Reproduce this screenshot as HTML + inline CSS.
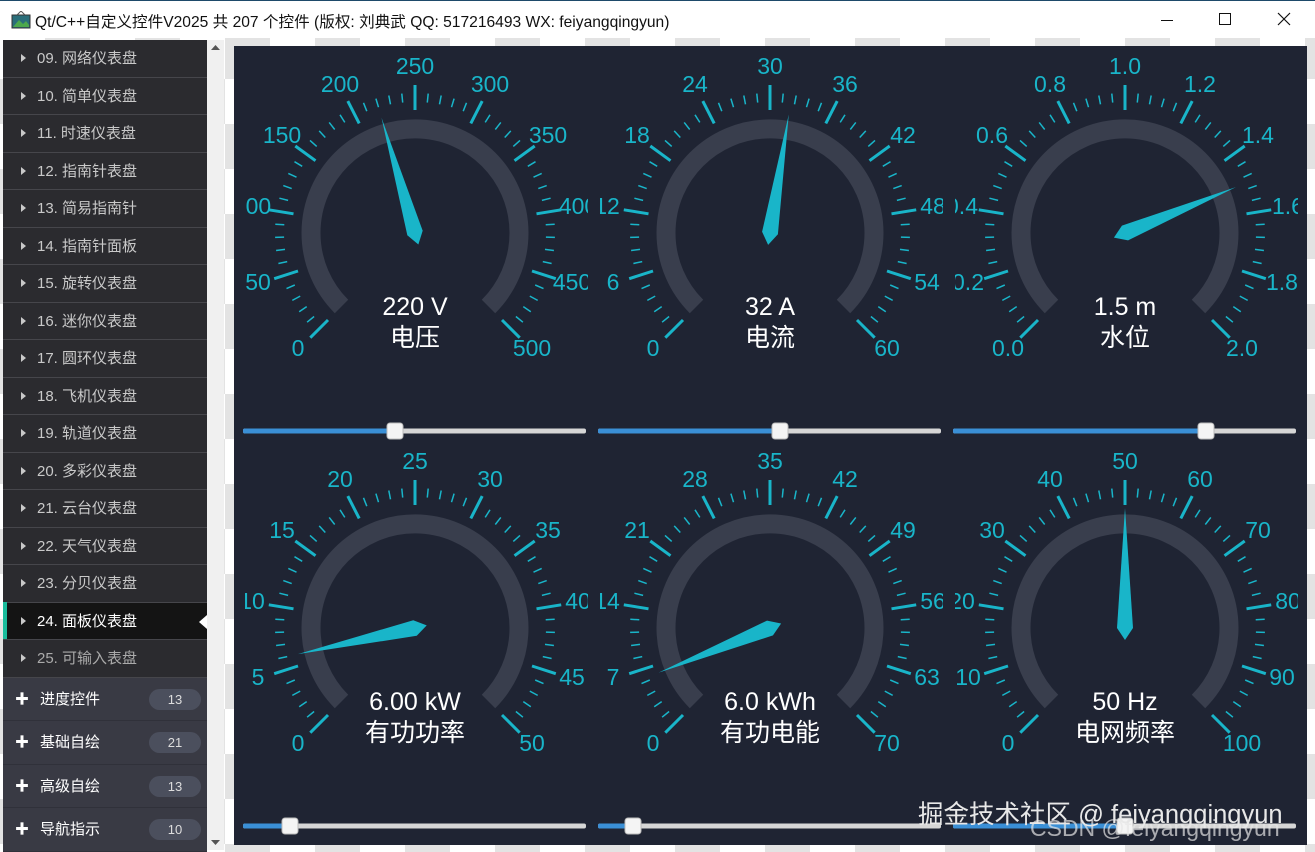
<!DOCTYPE html>
<html><head><meta charset="utf-8">
<style>
*{margin:0;padding:0;box-sizing:border-box}
body{width:1315px;height:852px;overflow:hidden;background:#fff;font-family:"Liberation Sans","Noto Sans CJK SC",sans-serif;position:relative}
#title{position:absolute;left:0;top:0;width:1315px;height:38px;background:#fff;border-top:1px solid #1e4a6a}
#title .t{position:absolute;left:35px;top:9px;font-size:15.6px;color:#111}
#bg{position:absolute;left:0;top:38px;width:1315px;height:814px;
background-color:#fff;background-image:repeating-conic-gradient(#e3e3e3 0 25%,#fff 0 50%);background-size:90px 90px;background-position:0 -4px}
#side{position:absolute;left:3px;top:40px;width:204px;height:810px;background:#2b2b2f}
.it{height:37.5px;border-bottom:1px solid #46464b;color:#c9c9c9;font-size:15px;line-height:37px;padding-left:34px;position:relative}
.it:before{content:"";position:absolute;left:18px;top:14px;border-left:5px solid #c9c9c9;border-top:4.5px solid transparent;border-bottom:4.5px solid transparent}
.it.a{background:#141414;color:#fff}
.it.a:after{content:"";position:absolute;right:0;top:12px;border-right:8px solid #fff;border-top:7px solid transparent;border-bottom:7px solid transparent}
.gr{height:43.5px;background:#393a44;border-bottom:1px solid #30313a;color:#fff;font-size:15px;line-height:43px;padding-left:37px;position:relative}
.gr:before{content:"✚";position:absolute;left:12px;top:0;font-size:14px;color:#fff}
.gr b{position:absolute;right:6px;top:11px;width:52px;height:21px;border-radius:11px;background:#4b4f5d;color:#ddd;font-weight:normal;font-size:13px;line-height:21px;text-align:center}
#sb{position:absolute;left:207px;top:40px;width:17px;height:810px;background:#f0f0f0}
#panel{position:absolute;left:234px;top:46px;width:1073px;height:799px;background:#1f2433}
.wm{position:absolute;font-size:22px;color:#e8e8e8;white-space:nowrap}
</style></head><body>
<div id="bg"></div>
<div id="title">
<svg style="position:absolute;left:11px;top:10px" width="20" height="18" viewBox="0 0 20 18"><rect x="1" y="4" width="18" height="13" fill="#2a6e7a" stroke="#333"/><path d="M2 16 L8 9 L12 13 L15 10 L18 14 V16Z" fill="#4ca84c"/><path d="M6 4 L10 0 L14 4" fill="none" stroke="#555"/></svg>
<span class="t">Qt/C++自定义控件V2025 共 207 个控件 (版权: 刘典武 QQ: 517216493 WX: feiyangqingyun)</span>
<div style="position:absolute;left:1161px;top:19px;width:12px;height:1px;background:#111"></div>
<div style="position:absolute;left:1219px;top:12px;width:12px;height:12px;border:1px solid #111"></div>
<svg style="position:absolute;left:1277px;top:11px" width="14" height="14"><path d="M1 1L13 13M13 1L1 13" stroke="#111" stroke-width="1.2"/></svg>
</div>
<div id="side">
<div class="it">09. 网络仪表盘</div><div class="it">10. 简单仪表盘</div><div class="it">11. 时速仪表盘</div><div class="it">12. 指南针表盘</div><div class="it">13. 简易指南针</div><div class="it">14. 指南针面板</div><div class="it">15. 旋转仪表盘</div><div class="it">16. 迷你仪表盘</div><div class="it">17. 圆环仪表盘</div><div class="it">18. 飞机仪表盘</div><div class="it">19. 轨道仪表盘</div><div class="it">20. 多彩仪表盘</div><div class="it">21. 云台仪表盘</div><div class="it">22. 天气仪表盘</div><div class="it">23. 分贝仪表盘</div><div class="it a">24. 面板仪表盘</div><div class="it" style="color:#aaa">25. 可输入表盘</div>
<div class="gr">进度控件<b>13</b></div><div class="gr">基础自绘<b>21</b></div><div class="gr">高级自绘<b>13</b></div><div class="gr">导航指示<b>10</b></div>
</div>
<div style="position:absolute;left:3px;top:602px;width:4px;height:37px;background:#1abc9c"></div>
<div id="sb"><svg width="17" height="17"><path d="M4 10L8.5 5L13 10Z" fill="#555"/></svg><svg style="position:absolute;left:0;bottom:0" width="17" height="17"><path d="M4 7L8.5 12L13 7Z" fill="#555"/></svg></div>
<div id="panel"></div>
<svg id="g" style="position:absolute;left:0;top:0" width="1315" height="852"></svg>
<svg style="position:absolute;left:0;top:0" width="1315" height="852" font-family="Liberation Sans, Noto Sans CJK SC, sans-serif">
<g font-size="23" fill="#19b5c9" text-anchor="middle" dominant-baseline="central">
<svg x="245" y="46" width="343" height="395" overflow="hidden"><g transform="translate(170,186)">
<text x="-117" y="116">0</text><text x="-157" y="50">50</text><text x="-163" y="-26">100</text><text x="-133" y="-97">150</text><text x="-75" y="-148">200</text><text x="0" y="-166">250</text><text x="75" y="-148">300</text><text x="133" y="-97">350</text><text x="163" y="-26">400</text><text x="157" y="50">450</text><text x="117" y="116">500</text>
<text x="0" y="75" fill="#fff" font-size="25">220 V</text><text x="0" y="106" fill="#fff" font-size="25">电压</text></g></svg>
<svg x="600" y="46" width="343" height="395" overflow="hidden"><g transform="translate(170,186)">
<text x="-117" y="116">0</text><text x="-157" y="50">6</text><text x="-163" y="-26">12</text><text x="-133" y="-97">18</text><text x="-75" y="-148">24</text><text x="0" y="-166">30</text><text x="75" y="-148">36</text><text x="133" y="-97">42</text><text x="163" y="-26">48</text><text x="157" y="50">54</text><text x="117" y="116">60</text>
<text x="0" y="75" fill="#fff" font-size="25">32 A</text><text x="0" y="106" fill="#fff" font-size="25">电流</text></g></svg>
<svg x="955" y="46" width="343" height="395" overflow="hidden"><g transform="translate(170,186)">
<text x="-117" y="116">0.0</text><text x="-157" y="50">0.2</text><text x="-163" y="-26">0.4</text><text x="-133" y="-97">0.6</text><text x="-75" y="-148">0.8</text><text x="0" y="-166">1.0</text><text x="75" y="-148">1.2</text><text x="133" y="-97">1.4</text><text x="163" y="-26">1.6</text><text x="157" y="50">1.8</text><text x="117" y="116">2.0</text>
<text x="0" y="75" fill="#fff" font-size="25">1.5 m</text><text x="0" y="106" fill="#fff" font-size="25">水位</text></g></svg>
<svg x="245" y="441" width="343" height="395" overflow="hidden"><g transform="translate(170,186)">
<text x="-117" y="116">0</text><text x="-157" y="50">5</text><text x="-163" y="-26">10</text><text x="-133" y="-97">15</text><text x="-75" y="-148">20</text><text x="0" y="-166">25</text><text x="75" y="-148">30</text><text x="133" y="-97">35</text><text x="163" y="-26">40</text><text x="157" y="50">45</text><text x="117" y="116">50</text>
<text x="0" y="75" fill="#fff" font-size="25">6.00 kW</text><text x="0" y="106" fill="#fff" font-size="25">有功功率</text></g></svg>
<svg x="600" y="441" width="343" height="395" overflow="hidden"><g transform="translate(170,186)">
<text x="-117" y="116">0</text><text x="-157" y="50">7</text><text x="-163" y="-26">14</text><text x="-133" y="-97">21</text><text x="-75" y="-148">28</text><text x="0" y="-166">35</text><text x="75" y="-148">42</text><text x="133" y="-97">49</text><text x="163" y="-26">56</text><text x="157" y="50">63</text><text x="117" y="116">70</text>
<text x="0" y="75" fill="#fff" font-size="25">6.0 kWh</text><text x="0" y="106" fill="#fff" font-size="25">有功电能</text></g></svg>
<svg x="955" y="441" width="343" height="395" overflow="hidden"><g transform="translate(170,186)">
<text x="-117" y="116">0</text><text x="-157" y="50">10</text><text x="-163" y="-26">20</text><text x="-133" y="-97">30</text><text x="-75" y="-148">40</text><text x="0" y="-166">50</text><text x="75" y="-148">60</text><text x="133" y="-97">70</text><text x="163" y="-26">80</text><text x="157" y="50">90</text><text x="117" y="116">100</text>
<text x="0" y="75" fill="#fff" font-size="25">50 Hz</text><text x="0" y="106" fill="#fff" font-size="25">电网频率</text></g></svg>
</g>
</svg>
<div class="wm" style="left:918px;top:794px;font-size:25.5px">掘金技术社区 @ feiyangqingyun</div>
<div class="wm" style="left:1030px;top:815px;font-size:23px;color:rgba(230,230,230,.7)">CSDN @feiyangqingyun</div>
<script>
var s='',ns=[[415,233,.44],[770,233,32/60],[1125,233,.75],[415,628,.12],[770,628,6/70],[1125,628,.5]];
function P(cx,cy,r,a){a=a*Math.PI/180;return [(cx+r*Math.cos(a)).toFixed(1),(cy-r*Math.sin(a)).toFixed(1)];}
ns.forEach(function(n){var cx=n[0],cy=n[1];
s+='<path d="M'+(cx-73.5)+' '+(cy+73.5)+' A104 104 0 1 1 '+(cx+73.5)+' '+(cy+73.5)+'" fill="none" stroke="#393e4d" stroke-width="19"/>';
for(var i=0;i<=50;i++){var a=225-5.4*i,mj=i%5==0,p=P(cx,cy,mj?123:131,a),q=P(cx,cy,mj?148:140,a);
s+='<line x1="'+p[0]+'" y1="'+p[1]+'" x2="'+q[0]+'" y2="'+q[1]+'" stroke="#19b5c9" stroke-width="'+(mj?3:1.5)+'"/>';}
var ang=225-270*n[2];
s+='<polygon points="120,0 0,-8 -12,0 0,8" fill="#19b5c9" transform="translate('+cx+','+cy+') rotate('+(-ang)+')"/>';
var sx=cx-172,w=343,y=cy+198,hx;
if(cx==415)hx=[395,290][cy<400?0:1];if(cx==770)hx=[780,633][cy<400?0:1];if(cx==1125)hx=[1206,1125][cy<400?0:1];
s+='<rect x="'+sx+'" y="'+(y-2.5)+'" width="'+w+'" height="5" rx="2" fill="#d6d6d6"/>';
s+='<rect x="'+sx+'" y="'+(y-2.5)+'" width="'+(hx-sx)+'" height="5" rx="2" fill="#3a8fd6"/>';
s+='<rect x="'+(hx-8)+'" y="'+(y-8)+'" width="16" height="16" rx="3" fill="#f4f4f4" stroke="#bbb"/>';
});
document.getElementById('g').innerHTML=s;
</script>
</body></html>
